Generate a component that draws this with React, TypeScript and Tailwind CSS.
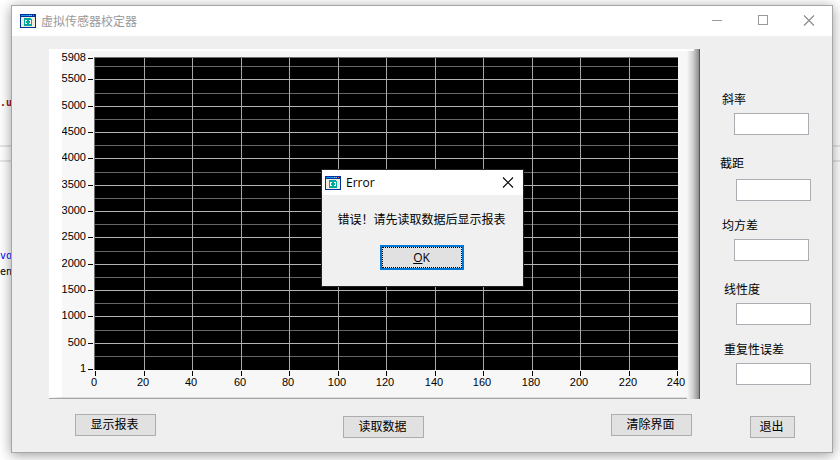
import React from "react";

const cjk = "font-['Noto_Sans_CJK_SC',sans-serif]";

function AppIcon() {
  return (
    <svg width="16" height="14" viewBox="0 0 16 14" shapeRendering="crispEdges" aria-hidden="true">
      <rect width="16" height="14" fill="#003399" />
      <rect x="1" y="1" width="10" height="1" fill="#1e90f0" />
      <rect x="9" y="1" width="1" height="1" fill="#8fc4f5" />
      <rect x="11" y="1" width="1" height="1" fill="#8fc4f5" />
      <rect x="13" y="1" width="1" height="1" fill="#f06030" />
      <rect x="1" y="3" width="14" height="10" fill="#f1eddd" />
      <path d="M4 4H11V5H12V12H4Z" fill="#00a8a0" />
      <path d="M5 6H7V7H6V9H7V10H5Z" fill="#fff" />
      <path d="M9 6H11V10H9V9H10V7H9Z" fill="#fff" />
    </svg>
  );
}

function CloseGlyph({ color }: { color: string }) {
  return (
    <svg width="12" height="12" viewBox="0 0 12 12" aria-hidden="true">
      <path d="M1 .5L11 10.5M11 .5L1 10.5" stroke={color} strokeWidth="1.1" fill="none" />
    </svg>
  );
}

function TitleBar() {
  return (
    <header className="flex h-[30px] items-center bg-white pl-2 pr-[17px]">
      <AppIcon />
      <h1 className="ml-[5px] flex-1 text-xs text-[#999999]">虚拟传感器校定器</h1>
      <div className="flex items-center gap-[34px]">
        <button type="button" aria-label="最小化">
          <svg width="12" height="12" viewBox="0 0 12 12" shapeRendering="crispEdges" className="block">
            <rect x="1" y="5" width="10" height="1" fill="#999" />
          </svg>
        </button>
        <button type="button" aria-label="最大化">
          <svg width="12" height="12" viewBox="0 0 12 12" shapeRendering="crispEdges" className="block">
            <rect x="1.5" y="0.5" width="9" height="9" fill="none" stroke="#999" />
          </svg>
        </button>
        <button type="button" aria-label="关闭">
          <CloseGlyph color="#8a8a8a" />
        </button>
      </div>
    </header>
  );
}

const yTicks = [5908, 5500, 5000, 4500, 4000, 3500, 3000, 2500, 2000, 1500, 1000, 500, 1];
const xTicks = Array.from({ length: 13 }, (_, i) => i * 20);
const yMinor = Array.from({ length: 12 }, (_, i) => 250 + i * 500).filter((v) => v < 5908);
const yPos = (v: number) => Math.round(369 - ((v - 1) * 311) / 5907);
const xPos = (v: number) => Math.round(95 + (v * 582) / 240);

function Graph() {
  return (
    <div className="flex min-w-0 flex-1">
      <div className="min-w-0 flex-1 border-b border-b-[#a6a6a6]">
        <div className="border-b border-l-[13px] border-t-2 border-b-[#dcdcdc] border-l-white border-t-white bg-[#f7f7f7]">
          <svg
            viewBox="62 51 625 346"
            className="block w-full font-['Liberation_Sans',Arial,sans-serif] text-[11px]"
            role="img"
            aria-label="传感器数据曲线"
          >
            <g shapeRendering="crispEdges">
              <rect x="94" y="57" width="584" height="313" fill="#000" />
              {yMinor.map((v) => (
                <rect key={v} x="95" y={yPos(v)} width="583" height="1" fill="#666" />
              ))}
              {xTicks.slice(1, -1).map((v) => (
                <rect key={v} x={xPos(v)} y="58" width="1" height="312" fill="#a8a8a8" />
              ))}
              {yTicks.slice(1, -1).map((v) => (
                <rect key={v} x="95" y={yPos(v)} width="583" height="1" fill="#b4b4b4" />
              ))}
              <rect x="94" y="57" width="584" height="1" fill="#707070" />
              <rect x="94" y="57" width="1" height="313" fill="#707070" />
              {yTicks.map((v) => (
                <rect key={v} x="88" y={yPos(v)} width="5" height="1" fill="#000" />
              ))}
              {xTicks.map((v) => (
                <rect key={v} x={xPos(v)} y="371" width="1" height="5" fill="#000" />
              ))}
            </g>
            {yTicks.map((v) => (
              <text key={v} x="86" y={yPos(v) + 3} textAnchor="end">
                {v}
              </text>
            ))}
            {xTicks.map((v) => (
              <text key={v} x={xPos(v) - 1} y="386" textAnchor="middle">
                {v}
              </text>
            ))}
          </svg>
        </div>
      </div>
      <div className="flex w-[13px] flex-col border-r border-r-[#555555] bg-linear-to-r from-[#f7f7f7] via-[#d0d0d0] to-[#8c8c8c]">
        <div className="mr-[5px] h-0.5 bg-white" />
      </div>
    </div>
  );
}

const fields = [
  { id: "slope", label: "斜率", group: "gap-1.5", labelPad: "pl-[22px]", inputPad: "pl-[34px]" },
  { id: "intercept", label: "截距", group: "mt-5 gap-2", labelPad: "pl-5", inputPad: "pl-9" },
  { id: "variance", label: "均方差", group: "mt-4 gap-1.5", labelPad: "pl-[22px]", inputPad: "pl-[34px]" },
  { id: "linearity", label: "线性度", group: "mt-5 gap-1.5", labelPad: "pl-6", inputPad: "pl-9" },
  { id: "repeat", label: "重复性误差", group: "mt-4 gap-1.5", labelPad: "pl-6", inputPad: "pl-9" },
];

function Results() {
  return (
    <div className="w-[132px] pt-[42px]">
      {fields.map((f) => (
        <div key={f.id} className={`flex flex-col ${f.group}`}>
          <label htmlFor={f.id} className={`text-xs ${f.labelPad}`}>
            {f.label}
          </label>
          <div className={`flex ${f.inputPad}`}>
            <input
              id={f.id}
              type="text"
              className="h-[22px] w-[75px] border border-[#abadb3] bg-white px-1 text-xs outline-none"
            />
          </div>
        </div>
      ))}
    </div>
  );
}

function PushButton({ children, className }: { children: string; className: string }) {
  return (
    <button
      type="button"
      className={`h-[22px] border border-[#adadad] bg-[#e1e1e1] pb-0.5 pr-0.5 text-center text-xs text-black ${className}`}
    >
      {children}
    </button>
  );
}

function ErrorDialog() {
  return (
    <div className="absolute inset-0 flex items-start justify-center pl-px pt-[163px]">
      <div
        role="alertdialog"
        aria-labelledby="dialog-title"
        aria-describedby="dialog-text"
        className="w-[203px] border border-[#202020] bg-[#f0f0f0] text-black"
      >
        <div className="flex h-[25px] items-center bg-white pl-[3px] pr-[9px]">
          <AppIcon />
          <h2 id="dialog-title" className="ml-[5px] flex-1 font-['Open_Sans',sans-serif] text-xs">
            Error
          </h2>
          <button type="button" aria-label="关闭">
            <CloseGlyph color="#000" />
          </button>
        </div>
        <div className="flex flex-col items-center gap-[18px] pb-4 pr-0.5 pt-4">
          <p id="dialog-text" className="whitespace-nowrap text-xs">
            错误！请先读取数据后显示报表
          </p>
          <button
            type="button"
            className="flex h-[25px] w-[84px] border-2 border-[#0078d7] bg-[#e1e1e1] font-['Open_Sans',sans-serif] text-xs"
          >
            <span className="flex h-full w-full items-center justify-center border border-dotted border-black">
              <span className="underline">O</span>K
            </span>
          </button>
        </div>
      </div>
    </div>
  );
}

function EditorBackdrop() {
  return (
    <div className="overflow-hidden pt-[95px] font-['DejaVu_Sans_Mono',monospace] text-[10px] leading-4">
      <p className="font-bold text-[#a31515]">.u</p>
      <div className="mt-[34px] h-[17px] border-y-2 border-[#e6e6e6]" />
      <p className="mt-[86px] text-[#0000ff]">vo</p>
      <p className="text-black">en</p>
    </div>
  );
}

export default function App() {
  return (
    <div className={`relative min-h-screen overflow-hidden bg-white ${cjk}`}>
      <EditorBackdrop />
      <main className="absolute left-[11px] right-[7px] top-[5px] border border-[#a6a6a6] bg-[#efefef] text-black shadow-[0_2px_12px_rgba(0,0,0,0.4)]">
        <TitleBar />
        <div className="flex items-start pl-[37px] pt-[13px]">
          <Graph />
          <Results />
        </div>
        <div className="flex items-start gap-[58px] pb-[14px] pl-[63px] pr-[37px] pt-[15px]">
          <div className="flex flex-1 items-start justify-between">
            <PushButton className="w-[81px]">显示报表</PushButton>
            <PushButton className="mt-0.5 w-[81px]">读取数据</PushButton>
            <PushButton className="w-[81px]">清除界面</PushButton>
          </div>
          <PushButton className="mt-0.5 w-[45px]">退出</PushButton>
        </div>
        <ErrorDialog />
      </main>
    </div>
  );
}
